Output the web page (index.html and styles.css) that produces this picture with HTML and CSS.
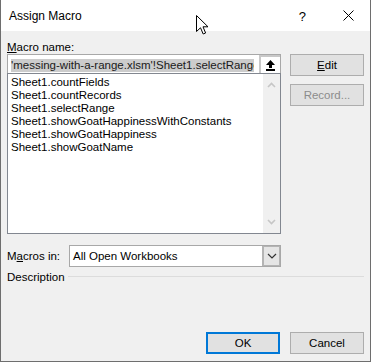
FILE: index.html
```html
<!DOCTYPE html>
<html>
<head>
<meta charset="utf-8">
<link rel="stylesheet" href="styles.css">
</head>
<body>
<div class="window">
  <div class="titlebar">
    <span class="title">Assign Macro</span>
    <span class="help">?</span>
    <svg class="close" width="11" height="11" viewBox="0 0 11 11"><path d="M0.5 0.5 L10.5 10.5 M10.5 0.5 L0.5 10.5" stroke="#000" stroke-width="1" fill="none"/></svg>
  </div>
  <div class="body">
    <div class="main">
      <div class="left">
        <div class="label"><u>M</u>acro name:</div>
        <div class="namebox">
          <span class="nametext">'messing-with-a-range.xlsm'!Sheet1.selectRange</span>
          <span class="collapse">
            <svg width="11" height="11" viewBox="0 0 11 11"><path d="M5.5 0 L10 5 L7 5 L7 8 L4 8 L4 5 L1 5 Z M1 9 L10 9 L10 11 L1 11 Z" fill="#000"/></svg>
          </span>
        </div>
        <div class="list">
          <div class="items">
            <div>Sheet1.countFields</div>
            <div>Sheet1.countRecords</div>
            <div>Sheet1.selectRange</div>
            <div>Sheet1.showGoatHappinessWithConstants</div>
            <div>Sheet1.showGoatHappiness</div>
            <div>Sheet1.showGoatName</div>
          </div>
          <div class="scrollbar">
            <svg width="9" height="6" viewBox="0 0 9 6"><path d="M1 5 L4.5 1.5 L8 5" stroke="#c6c6c6" stroke-width="1.6" fill="none"/></svg>
            <svg width="9" height="6" viewBox="0 0 9 6"><path d="M1 1 L4.5 4.5 L8 1" stroke="#c6c6c6" stroke-width="1.6" fill="none"/></svg>
          </div>
        </div>
      </div>
      <div class="right">
        <div class="btn"><u>E</u>dit</div>
        <div class="btn disabled">Record...</div>
      </div>
    </div>
    <div class="macros-row">
      <span class="label">M<u>a</u>cros in:</span>
      <div class="combo">
        <span class="combotext">All Open Workbooks</span>
        <span class="dropbtn"><svg width="10" height="6" viewBox="0 0 10 6"><path d="M1 1 L5 5 L9 1" stroke="#333" stroke-width="1.2" fill="none"/></svg></span>
      </div>
    </div>
    <div class="desc-row">
      <span class="label">Description</span>
      <span class="rule"></span>
    </div>
    <div class="footer">
      <div class="btn default">OK</div>
      <div class="btn">Cancel</div>
    </div>
  </div>
  <svg class="cursor" width="14" height="21" viewBox="0 0 14 21"><path d="M0.5 0.5 L0.5 16.5 L4.5 12.8 L7.2 19 L9.6 18 L7 11.8 L12 11.8 Z" fill="#fff" stroke="#000" stroke-width="1" stroke-linejoin="miter"/></svg>
</div>
</body>
</html>
```

FILE: styles.css
```css
html, body {
  margin: 0;
  padding: 0;
  background: #ffffff;
}
body {
  font-family: "Liberation Sans", Arial, sans-serif;
  font-size: 11.5px;
  color: #000;
}
u {
  text-decoration: underline;
  text-underline-offset: 1px;
}
.window {
  position: relative;
  width: 369px;
  height: 361px;
  border-left: 1px solid #6e6e6e;
  border-right: 1px solid #6e6e6e;
  border-bottom: 1px solid #6e6e6e;
  background: #f0f0f0;
  display: flex;
  flex-direction: column;
}
.titlebar {
  height: 31px;
  background: #ffffff;
  display: flex;
  align-items: center;
  flex-shrink: 0;
}
.title {
  font-size: 12px;
  margin-left: 8px;
  margin-top: 1px;
  flex: 1;
}
.help {
  font-size: 13px;
  margin-right: 37px;
  margin-top: 1px;
}
.close {
  margin-right: 16px;
}
.body {
  flex: 1;
  display: flex;
  flex-direction: column;
  padding: 9px 6px 7px 6px;
}
.main {
  display: flex;
  gap: 9px;
}
.left {
  width: 274px;
  display: flex;
  flex-direction: column;
}
.label {
  height: 14px;
  line-height: 14px;
}
.namebox {
  height: 19px;
  box-sizing: border-box;
  border: 1px solid #a8a8a8;
  border-bottom: none;
  background: #fff;
  display: flex;
  align-items: center;
  padding-left: 3px;
}
.nametext {
  width: 243px;
  height: 13px;
  line-height: 13px;
  background: #cccccc;
  white-space: nowrap;
  overflow: hidden;
  color: #1a1a1a;
  margin-top: 2px;
}
.collapse {
  margin-left: auto;
  width: 21px;
  height: 19px;
  box-sizing: border-box;
  border: 2px solid #c8c8c8;
  border-bottom: none;
  border-right: none;
  background: #fff;
  display: flex;
  align-items: center;
  justify-content: center;
}
.list {
  height: 161px;
  box-sizing: border-box;
  border: 1px solid #828790;
  background: #fff;
  display: flex;
}
.items {
  flex: 1;
  padding: 2px 0 0 3px;
  line-height: 13px;
  white-space: nowrap;
  overflow: hidden;
}
.scrollbar {
  width: 17px;
  background: #f0f0f0;
  display: flex;
  flex-direction: column;
  justify-content: space-between;
  align-items: center;
  padding: 8px 0 8px 0;
}
.right {
  width: 74px;
  display: flex;
  flex-direction: column;
  gap: 8px;
  padding-top: 14px;
}
.btn {
  width: 74px;
  height: 22px;
  box-sizing: border-box;
  border: 1px solid #adadad;
  background: #e1e1e1;
  display: flex;
  align-items: center;
  justify-content: center;
  line-height: 14px;
}
.btn.disabled {
  color: #8c8c8c;
}
.btn.default {
  border: 2px solid #0078d7;
}
.macros-row {
  display: flex;
  align-items: center;
  margin-top: 11px;
  gap: 0;
}
.macros-row .label {
  width: 62px;
}
.combo {
  width: 212px;
  height: 22px;
  box-sizing: border-box;
  border: 1px solid #a8a8a8;
  background: #fff;
  display: flex;
  align-items: center;
}
.combotext {
  flex: 1;
  padding-left: 3px;
}
.dropbtn {
  width: 18px;
  height: 20px;
  box-sizing: border-box;
  border: 1px solid #b4b4b4;
  border-left: 2px solid #b4b4b4;
  background: #e5e5e5;
  display: flex;
  align-items: center;
  justify-content: center;
}
.desc-row {
  display: flex;
  align-items: center;
  margin-top: 3px;
  height: 14px;
}
.rule {
  flex: 1;
  height: 1px;
  background: #dcdcdc;
  margin-left: 3px;
  margin-top: -1px;
}
.footer {
  margin-top: auto;
  display: flex;
  justify-content: flex-end;
  gap: 10px;
}
.cursor {
  position: absolute;
  left: 195px;
  top: 15px;
}
```
